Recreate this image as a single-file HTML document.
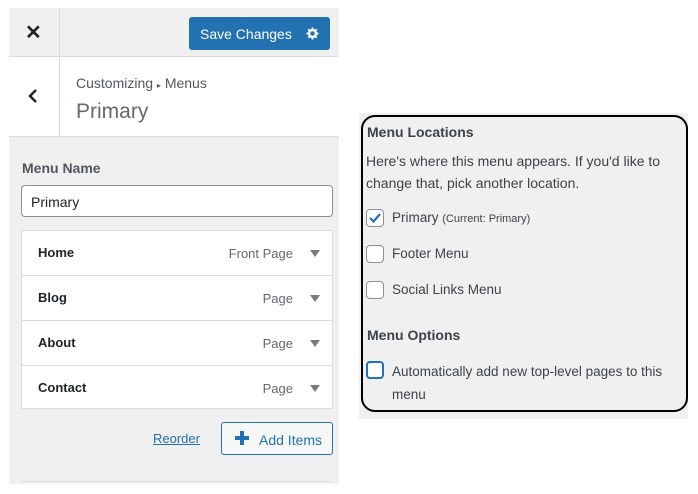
<!DOCTYPE html>
<html><head><style>
*{box-sizing:border-box;margin:0;padding:0}
body{width:698px;height:494px;background:#fff;font-family:"Liberation Sans",sans-serif;position:relative;overflow:hidden;color:#1d2327}
.a{position:absolute}
.lp{left:9px;top:8px;width:330px;height:476px;background:#f0f0f1}
.row{position:absolute;left:22px;width:310px;height:45px;background:#fff;border-bottom:1px solid #dcdcde}
.row b{position:absolute;left:16px;top:14px;font-size:13px;font-weight:bold;color:#1d2327}
.row span{position:absolute;right:39px;top:15px;font-size:13px;color:#646970}
.row i{position:absolute;right:12px;top:19px;width:0;height:0;border-left:5px solid transparent;border-right:5px solid transparent;border-top:7px solid #787c82}
.cb{position:absolute;left:366px;width:18px;height:18px;border:1px solid #8c8f94;border-radius:4px;background:#fff}
.lbl{position:absolute;left:392px;font-size:13.5px;color:#3c434a}
</style></head><body>
<div class="a lp"></div>
<div class="a" style="left:59px;top:8px;width:1px;height:48px;background:#dcdcde"></div>
<div class="a" style="left:25px;top:20px;font-size:20px;font-weight:bold;color:#1d2327">✕</div>
<div class="a" style="left:189px;top:17px;width:141px;height:33px;background:#2271b1;border-radius:3px;color:#fff;font-size:14px;padding:9px 0 0 11px">Save Changes</div>
<svg class="a" style="left:305px;top:26px" width="15" height="15" viewBox="0 0 20 20"><path fill="#fff" d="M18 11V9l-2.3-.6-.6-1.4 1.2-2-1.4-1.4-2 1.2-1.4-.6L11 2H9l-.6 2.3-1.4.6-2-1.2-1.4 1.4 1.2 2-.6 1.4L2 9v2l2.3.6.6 1.4-1.2 2 1.4 1.4 2-1.2 1.4.6L9 18h2l.6-2.3 1.4-.6 2 1.2 1.4-1.4-1.2-2 .6-1.4zM10 13a3 3 0 110-6 3 3 0 010 6z"/></svg>
<div class="a" style="left:9px;top:56px;width:330px;height:81px;background:#fff;border-top:1px solid #dcdcde;border-bottom:1px solid #dcdcde"></div>
<div class="a" style="left:59px;top:57px;width:1px;height:80px;background:#dcdcde"></div>
<svg class="a" style="left:27px;top:88px" width="12" height="16" viewBox="0 0 12 16"><path d="M9 2L3 8l6 6" stroke="#1d2327" stroke-width="2.5" fill="none"/></svg>
<div class="a" style="left:76px;top:75px;font-size:14px;color:#50575e">Customizing <span style="font-size:8px">▸</span> Menus</div>
<div class="a" style="left:76px;top:100px;font-size:21px;color:#646970">Primary</div>
<div class="a" style="left:22px;top:160px;font-size:14px;font-weight:bold;color:#50575e">Menu Name</div>
<div class="a" style="left:21px;top:185px;width:312px;height:32px;background:#fff;border:1px solid #8c8f94;border-radius:4px;font-size:14px;padding:8px 9px">Primary</div>
<div class="a" style="left:21px;top:230px;width:312px;height:179px;background:#fff;border:1px solid #dcdcde"></div>
<div class="row" style="top:231px"><b>Home</b><span>Front Page</span><i></i></div>
<div class="row" style="top:276px"><b>Blog</b><span>Page</span><i></i></div>
<div class="row" style="top:321px"><b>About</b><span>Page</span><i></i></div>
<div class="row" style="top:366px;border-bottom:0;height:42px"><b>Contact</b><span>Page</span><i></i></div>
<div class="a" style="left:153px;top:431px;font-size:13px;color:#2271b1;text-decoration:underline">Reorder</div>
<div class="a" style="left:221px;top:422px;width:112px;height:33px;border:1px solid #2271b1;border-radius:3px;background:#f6f7f7;color:#2271b1;font-size:14px;padding:9px 0 0 37px">Add Items</div>
<div class="a" style="left:235px;top:436px;width:14px;height:4px;background:#2271b1"></div>
<div class="a" style="left:240px;top:431px;width:4px;height:14px;background:#2271b1"></div>
<div class="a" style="left:21px;top:481px;width:312px;height:1px;background:#dcdcde"></div>

<div class="a" style="left:359px;top:113px;width:329px;height:306px;background:#f0f0f1"></div>
<div class="a" style="left:361px;top:115px;width:327px;height:297px;border:2.5px solid #000;border-radius:14px"></div>
<div class="a" style="left:367px;top:124px;font-size:14px;font-weight:bold;color:#3c434a">Menu Locations</div>
<div class="a" style="left:366px;top:150px;font-size:14px;line-height:22px;color:#3c434a;width:318px">Here's where this menu appears. If you'd like to change that, pick another location.</div>
<div class="cb" style="top:209px"></div>
<svg class="a" style="left:367px;top:210px" width="16" height="16" viewBox="0 0 16 16"><path d="M3 8l3.5 3.5L13 4" stroke="#2271b1" stroke-width="2.2" fill="none"/></svg>
<div class="lbl" style="top:210px">Primary <span style="font-size:11px">(Current: Primary)</span></div>
<div class="cb" style="top:245px"></div><div class="lbl" style="top:246px">Footer Menu</div>
<div class="cb" style="top:281px"></div><div class="lbl" style="top:282px">Social Links Menu</div>
<div class="a" style="left:367px;top:327px;font-size:14px;font-weight:bold;color:#3c434a">Menu Options</div>
<div class="cb" style="top:361px;border:2px solid #2271b1"></div>
<div class="lbl" style="top:360px;line-height:23px;width:300px">Automatically add new top-level pages to this menu</div>
</body></html>
